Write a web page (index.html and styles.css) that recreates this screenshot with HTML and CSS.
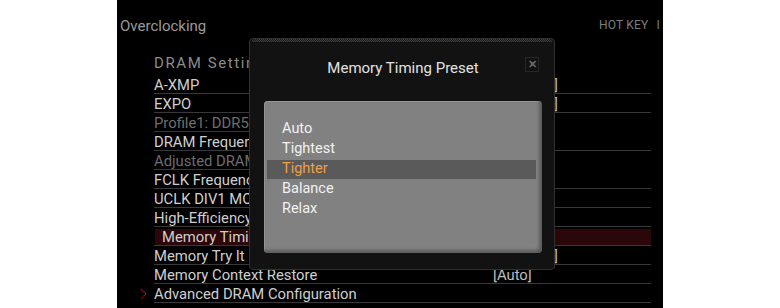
FILE: index.html
```html
<!DOCTYPE html>
<html>
<head>
<meta charset="utf-8">
<link rel="stylesheet" href="styles.css">
</head>
<body>
<div class="screen">
  <div class="header">
    <div class="title">Overclocking</div>
    <div class="hotkey">HOT KEY<span class="sep">I</span></div>
  </div>
  <div class="section">DRAM Settings</div>
  <div class="rows">
    <div class="row"><span class="label">A-XMP</span><span class="value">[Disabled]</span></div>
    <div class="row"><span class="label">EXPO</span><span class="value">[Disabled]</span></div>
    <div class="row short"><span class="label dim">Profile1: DDR5</span></div>
    <div class="row"><span class="label">DRAM Frequency</span></div>
    <div class="row short"><span class="label dim">Adjusted DRAM</span></div>
    <div class="row"><span class="label">FCLK Frequency</span></div>
    <div class="row"><span class="label">UCLK DIV1 MODE</span></div>
    <div class="row"><span class="label">High-Efficiency</span></div>
    <div class="row active"><div class="hl"><span class="label">Memory Timing</span></div></div>
    <div class="row"><span class="label">Memory Try It !</span><span class="value">[Disabled]</span></div>
    <div class="row"><span class="label">Memory Context Restore</span><span class="value">[Auto]</span></div>
    <div class="row"><span class="chev"><svg width="8" height="12" viewBox="0 0 8 12"><polyline points="1,1 6,6 1,11" fill="none" stroke="#c8161d" stroke-width="1.4" stroke-dasharray="1 0.8"/></svg></span><span class="label">Advanced DRAM Configuration</span></div>
  </div>

  <div class="dialog">
    <div class="grip"></div>
    <div class="dlg-head">
      <span class="dlg-title">Memory Timing Preset</span>
      <span class="close">&#x2715;</span>
    </div>
    <div class="panel">
      <div class="item">Auto</div>
      <div class="item">Tightest</div>
      <div class="item sel">Tighter</div>
      <div class="item">Balance</div>
      <div class="item">Relax</div>
    </div>
  </div>
</div>
</body>
</html>
```

FILE: styles.css
```css
html, body {
  margin: 0;
  padding: 0;
  background: #fff;
}
body {
  font-family: Roboto, "Liberation Sans", sans-serif;
}
.screen {
  position: relative;
  margin-left: 117px;
  width: 546px;
  height: 308px;
  background: #000;
  overflow: hidden;
}
.header {
  display: flex;
  justify-content: space-between;
  align-items: center;
  height: 50px;
  padding: 0 0 0 3px;
}
.title {
  font-size: 15px;
  color: #9a9a9a;
  margin-top: 1px;
}
.hotkey {
  font-size: 12px;
  color: #7d7d7d;
  letter-spacing: 0.2px;
  margin-top: -1px;
}
.hotkey .sep {
  margin-left: 8px;
  margin-right: 3px;
}
.section {
  height: 25px;
  line-height: 27px;
  padding-left: 37px;
  font-size: 15px;
  letter-spacing: 1.6px;
  color: #8c8c8c;
}
.rows {
  margin-left: 37px;
  width: 497px;
}
.row {
  border-bottom: 1px solid #383838;
  display: flex;
  align-items: center;
  position: relative;
  font-size: 14.8px;
  color: #cfcfcf;
  padding-top: 1px;
  box-sizing: border-box;
  height: 19px;
}
.row.short {
  background: linear-gradient(#383838, #383838) left bottom / 400px 1px no-repeat;
  border-bottom: 0;
}
.label {
  white-space: nowrap;
}
.label.dim {
  color: #6e6e6e;
}
.value {
  position: absolute;
  left: 339px;
  color: #bdbdbd;
  white-space: nowrap;
}
.row.active {
  padding-top: 0;
}
.row.active .hl {
  flex: 1;
  align-self: stretch;
  margin: 2px 0 0 1px;
  background: #2c0709;
  display: flex;
  align-items: center;
  padding-left: 7px;
}
.chev {
  position: absolute;
  left: -14px;
  top: 4px;
  display: flex;
}
.dialog {
  position: absolute;
  left: 132px;
  top: 38px;
  width: 304px;
  height: 230px;
  background: #121212;
  border: 1px solid #303030;
  border-radius: 4px;
}
.grip {
  height: 3px;
  margin: 0 2px;
  background: repeating-conic-gradient(#3c3c3c 0 25%, #1c1c1c 0 50%) 0 0 / 2px 2px;
  border-radius: 3px 3px 0 0;
}
.dlg-head {
  position: relative;
  height: 45px;
  display: flex;
  justify-content: center;
  align-items: center;
}
.dlg-title {
  font-size: 15px;
  color: #e2e2e2;
  margin-top: 6px;
  margin-left: 2px;
}
.close {
  position: absolute;
  left: 275px;
  top: 15px;
  width: 14px;
  height: 15px;
  border: 1px solid #262626;
  box-sizing: border-box;
  color: #6a6a6a;
  font-size: 11px;
  line-height: 13px;
  text-align: center;
  font-weight: bold;
}
.panel {
  margin: 14px 0 0 14px;
  width: 278px;
  height: 152px;
  box-sizing: border-box;
  background: #818181;
  border-radius: 4px;
  padding: 18px 6px 0 3px;
  box-shadow: inset -3px -3px 3px rgba(0,0,0,0.28), inset 1px 1px 0 #939393;
}
.item {
  height: 20px;
  line-height: 20px;
  padding-left: 15px;
  font-size: 14.5px;
  color: #f2f2f2;
}
.item.sel {
  background: #5a5a5a;
  color: #f0a047;
  margin-top: 1px;
  height: 19px;
  line-height: 17px;
}
```
